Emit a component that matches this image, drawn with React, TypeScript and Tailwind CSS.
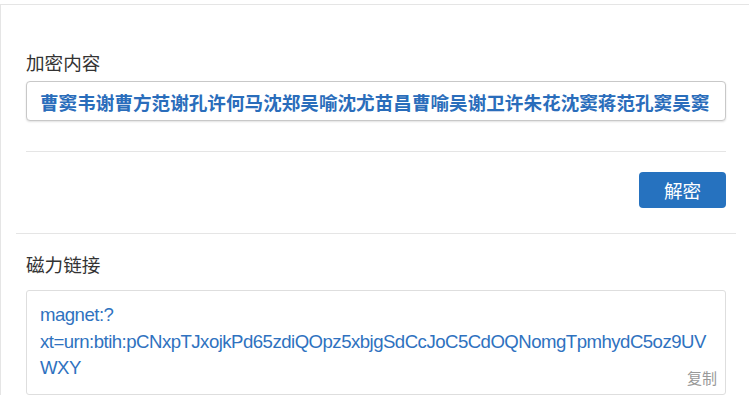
import { useState } from "react";

const CIPHER = "曹窦韦谢曹方范谢孔许何马沈郑吴喻沈尤苗昌曹喻吴谢卫许朱花沈窦蒋范孔窦吴窦";
const MAGNET = "magnet:?xt=urn:btih:pCNxpTJxojkPd65zdiQOpz5xbjgSdCcJoC5CdOQNomgTpmhydC5oz9UVWXY";

const cjk = "font-['Noto_Sans_CJK_SC','Noto_Sans',sans-serif]";

export default function App() {
  const [cipher, setCipher] = useState(CIPHER);

  return (
    <div className={`min-h-[414px] bg-white pt-[4px] ${cjk}`}>
      <div className="border-l border-t border-[#e5e5e5]">
        <section className="ml-[15px] mr-[13px] border-b border-[#e5e5e5] px-[10px] pb-[25px] pt-[44px]">
          <label className="block text-[18.6px] leading-[26px] text-[#333]" htmlFor="cipher">加密内容</label>
          <input
            className="mt-[6px] block h-[40px] w-full rounded-[4px] border border-[#c8c8c8] bg-white px-[13px] text-[18.6px] font-bold text-[#2a6dbb] shadow-[0_1px_2px_rgba(0,0,0,0.12)] outline-none"
            id="cipher"
            onChange={(event) => setCipher(event.target.value)}
            type="text"
            value={cipher}
          />
          <hr className="mt-[30px] border-t border-[#e5e5e5]" />
          <div className="mt-[20px] flex justify-end">
            <button className="h-[36px] w-[87px] rounded-[4px] bg-[#2672bf] text-[18.6px] text-white" type="button">解密</button>
          </div>
        </section>

        <section className="ml-[15px] mr-[13px] px-[10px] pt-[17px]">
          <h3 className="text-[18.6px] leading-[26px] text-[#333]">磁力链接</h3>
          <div className="relative mt-[13px] rounded-[3px] border border-[#dedede] px-[13px] pb-[12px] pt-[11px]">
            <p className="break-words font-['Liberation_Sans',Arial,sans-serif] text-[18.6px] leading-[26.5px] tracking-[-0.52px] text-[#2f72c0]">{MAGNET}</p>
            <button className="absolute bottom-[6px] right-[8px] text-[15px] leading-[20px] text-[#999]" type="button">复制</button>
          </div>
        </section>
      </div>
    </div>
  );
}
